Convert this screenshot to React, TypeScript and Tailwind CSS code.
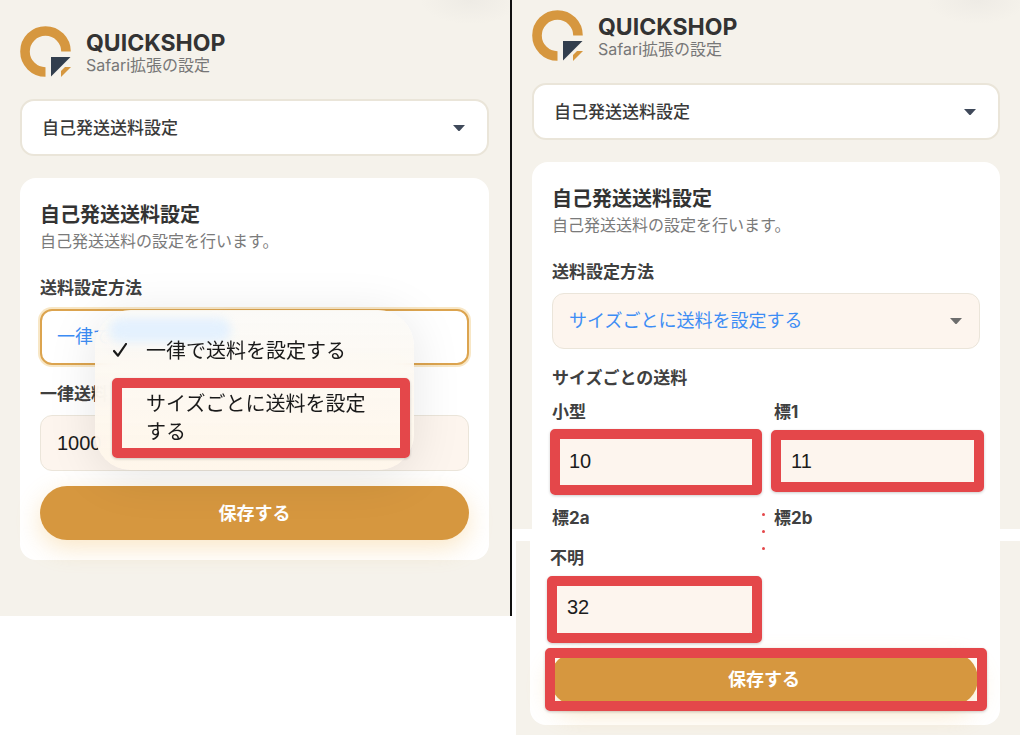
import { useState } from 'react';
import type { ReactNode } from 'react';
import clsx from 'clsx';

const FLAT = '一律で送料を設定する';
const BY_SIZE = 'サイズごとに送料を設定する';

function Logo() {
  return (
    <svg viewBox="0 0 51 51" className="size-[51px] shrink-0" aria-hidden="true">
      <path d="M25.5 46A20.5 20.5 0 1 1 46 25.5" fill="none" stroke="#d6973f" strokeWidth="9.6" />
      <path d="M31 31H50.5L31 50.5Z" fill="#323e4d" />
      <path d="M45 41H51L41 51V45Z" fill="#d6973f" />
    </svg>
  );
}

function Header() {
  return (
    <header className="flex items-end gap-[15px]">
      <Logo />
      <div>
        <h1 className="text-[23px] leading-5 font-bold text-[#333]">QUICKSHOP</h1>
        <p className="text-base leading-6 text-[#777]">Safari拡張の設定</p>
      </div>
    </header>
  );
}

function Caret({ className }: { className: string }) {
  return (
    <svg viewBox="0 0 12 7" className={clsx('pointer-events-none absolute top-1/2 h-[7px] w-3 -translate-y-1/2', className)} aria-hidden="true">
      <path d="M0 0.5H12L7 6Q6 7 5 6Z" fill="currentColor" />
    </svg>
  );
}

// Red frame drawn over the part of the screen being explained
function Callout({ className }: { className: string }) {
  return (
    <span
      aria-hidden="true"
      className={clsx('pointer-events-none absolute rounded-[5px] border-10 border-[#e4474a] shadow-[0_1px_3px_rgba(0,0,0,0.2)]', className)}
    />
  );
}

function SectionSelect() {
  return (
    <div className="relative mt-[22px]">
      <select
        aria-label="設定項目"
        className="h-[57px] w-full appearance-none rounded-[14px] border-2 border-[#eae5d9] bg-white px-5 pt-0.5 text-[17px] font-medium text-[#3a3a3a]"
      >
        <option>自己発送送料設定</option>
      </select>
      <Caret className="right-6 text-[#3f495a]" />
    </div>
  );
}

function CardIntro() {
  return (
    <>
      <h2 className="text-xl leading-[26px] font-bold text-[#333]">自己発送送料設定</h2>
      <p className="text-base leading-[26px] text-[#7a7a7a]">自己発送送料の設定を行います。</p>
    </>
  );
}

const labelClass = 'block text-[17px] leading-[26px] font-bold text-[#404040]';

interface PriceFieldProps {
  id: string;
  label: string;
  value: string;
  children?: ReactNode;
}

function PriceField({ id, label, value, children }: PriceFieldProps) {
  const [price, setPrice] = useState(value);

  return (
    <div>
      <label htmlFor={id} className={labelClass}>{label}</label>
      <div className="relative mt-2">
        <input
          id={id}
          type="text"
          inputMode="numeric"
          value={price}
          onChange={(e) => setPrice(e.target.value)}
          className="h-14 w-full rounded-xl border border-[#ebe5da] bg-[#fdf5ee] px-4 font-['Liberation_Sans','Noto_Sans_CJK_JP',sans-serif] text-xl text-[#1c1c1c]"
        />
        {children}
      </div>
    </div>
  );
}

function SaveButton() {
  return (
    <button
      type="button"
      className="h-[54px] w-full rounded-full bg-[#d6973f] pt-0.5 text-lg font-bold text-white shadow-[0_8px_24px_rgba(240,180,80,0.32)]"
    >
      保存する
    </button>
  );
}

function MethodMenu() {
  return (
    <ul
      role="listbox"
      aria-label="送料設定方法の候補"
      className="absolute inset-x-[55px] top-px z-10 h-40 rounded-[36px] bg-linear-to-b from-[#fbfaf7]/90 to-[#fff6ea]/95 pt-[27px] text-xl leading-7 text-[#1a1a1a] shadow-[0_6px_50px_rgba(0,0,0,0.1)] backdrop-blur-md"
    >
      <li aria-hidden="true" className="absolute top-2 left-3.5 h-6 w-[122px] rounded-full bg-[#e4f1fe] blur-[5px]" />
      <li role="option" aria-selected="true" className="relative pl-[51px]">
        <svg viewBox="0 0 14 14" className="absolute top-1.5 left-[18px] size-3.5" aria-hidden="true">
          <path d="M1 8L5 12.7L13 1" fill="none" stroke="currentColor" strokeWidth="2.2" strokeLinecap="round" strokeLinejoin="round" />
        </svg>
        {FLAT}
      </li>
      <li role="option" aria-selected="false" className="relative mt-[25px] pr-9 pl-[51px]">
        {BY_SIZE}
        <Callout className="-top-3 right-1 -bottom-3 left-[17px]" />
      </li>
    </ul>
  );
}

function FlatRatePane() {
  return (
    <section className="border-r-2 border-[#111] bg-[#f5f2eb] bg-[radial-gradient(50px_24px_at_470px_0,#eeebe5,transparent)] pt-[26px] pr-[21px] pb-14 pl-5">
      <Header />
      <SectionSelect />
      <div className="mt-[22px] rounded-2xl bg-white px-5 pt-6 pb-5">
        <CardIntro />
        <label htmlFor="method-flat" className={clsx(labelClass, 'mt-[21px]')}>送料設定方法</label>
        <div className="relative mt-2 mb-4">
          <select
            id="method-flat"
            className="h-14 w-full appearance-none rounded-xl border-2 border-[#dca44f] bg-white px-[15px] text-lg text-[#3d8df5] shadow-[0_0_0_2px_#f8e7c6]"
          >
            <option>{FLAT}</option>
          </select>
          <MethodMenu />
        </div>
        <PriceField id="flat-price" label="一律送料" value="1000" />
        <div className="mt-[15px]">
          <SaveButton />
        </div>
      </div>
    </section>
  );
}

function BySizePane() {
  return (
    <section>
      <div className="mr-1 bg-[#f5f2eb] bg-[radial-gradient(50px_24px_at_465px_0,#eeebe5,transparent)] px-5 pt-2.5">
        <Header />
        <SectionSelect />
        <div className="mt-[22px] rounded-t-2xl bg-white px-5 pt-6">
          <CardIntro />
          <label htmlFor="method-size" className={clsx(labelClass, 'mt-[21px]')}>送料設定方法</label>
          <div className="relative mt-2">
            <select
              id="method-size"
              className="h-14 w-full appearance-none rounded-xl border border-[#ebe5da] bg-[#fdf5ee] px-4 text-lg text-[#3d8df5]"
            >
              <option>{BY_SIZE}</option>
            </select>
            <Caret className="right-[18px] text-[#6d6d6d]" />
          </div>
          <h3 className={clsx(labelClass, 'mt-4')}>サイズごとの送料</h3>
          <div className="mt-2 grid grid-cols-2 gap-x-4 gap-y-4">
            <PriceField id="price-small" label="小型" value="10">
              <Callout className="-top-1 -right-1 -bottom-1.5 -left-0.5" />
            </PriceField>
            <PriceField id="price-1" label="標1" value="11">
              <Callout className="-inset-y-[3px] -right-1 -left-[3px]" />
            </PriceField>
            <p className={clsx(labelClass, 'relative -mb-0.5')}>
              標2a
              <span aria-hidden="true" className="absolute top-2 -right-[7px] flex flex-col gap-3.5">
                <span className="size-[3px] rounded-full bg-[#e4474a]" />
                <span className="size-[3px] rounded-full bg-[#e4474a]" />
                <span className="size-[3px] rounded-full bg-[#e4474a]" />
              </span>
            </p>
            <p className={clsx(labelClass, '-mb-0.5')}>標2b</p>
          </div>
        </div>
      </div>
      <div className="mt-3 mr-1 ml-1 bg-[#f5f2eb] pr-5 pb-2.5 pl-3.5">
        <div className="rounded-b-2xl bg-white pt-1 pr-[22px] pb-[19px] pl-5">
          <div className="grid grid-cols-2 gap-4">
            <PriceField id="price-unknown" label="不明" value="32">
              <Callout className="-top-[3px] -right-1.5 -bottom-2 -left-[3px]" />
            </PriceField>
          </div>
          <div className="relative mt-[17px]">
            <SaveButton />
            <Callout className="-top-1 -right-[9px] -bottom-[5px] -left-[5px]" />
          </div>
        </div>
      </div>
    </section>
  );
}

export default function App() {
  return (
    <main className="grid grid-cols-2 items-start bg-white font-['Inter','Noto_Sans_CJK_JP',sans-serif]" lang="ja">
      <FlatRatePane />
      <BySizePane />
    </main>
  );
}
